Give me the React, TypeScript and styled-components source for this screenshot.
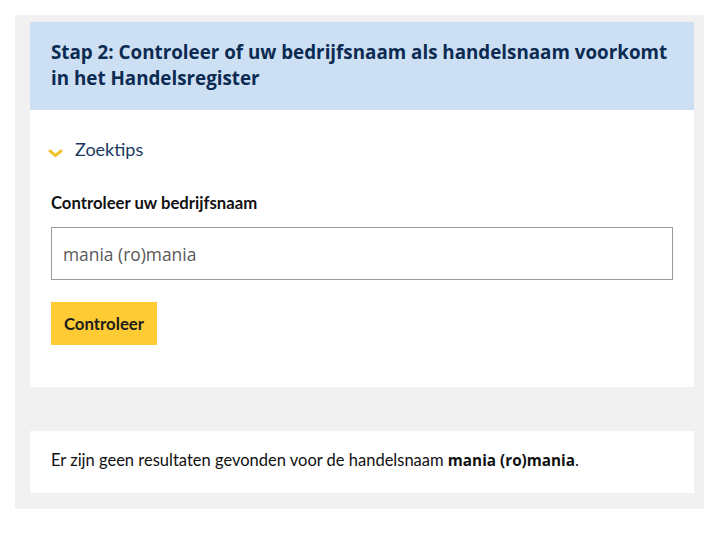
import React from "react";
import styled, { createGlobalStyle } from "styled-components";

const Global = createGlobalStyle`
  html, body { margin: 0; padding: 0; background: #ffffff; }
  body { font-family: Lato, "Open Sans", sans-serif; }
  * { box-sizing: border-box; }
`;

const Outer = styled.div`
  margin: 15px 0 0 15px;
  width: 689px;
  background: #f1f1f1;
  padding: 7px 10px 16px 15px;
  display: flex;
  flex-direction: column;
  gap: 44px;
`;

const Card = styled.section`
  background: #ffffff;
  display: flex;
  flex-direction: column;
`;

const Header = styled.div`
  background: #cddff3;
  height: 88px;
  padding: 17px 8px 0 21px;
`;

const Heading = styled.h2`
  margin: 0;
  font-family: "Open Sans", sans-serif;
  font-size: 18.8px;
  line-height: 26px;
  font-weight: 700;
  color: #0b2b52;
`;

const Body = styled.div`
  padding: 28px 21px 42px 21px;
  display: flex;
  flex-direction: column;
`;

const Toggle = styled.div`
  display: flex;
  align-items: center;
  gap: 12px;
  color: #1a3a63;
  font-size: 18px;
  height: 22px;
  margin-left: -3px;
  svg { margin-top: 7px; }
`;

const Label = styled.label`
  margin-top: 33px;
  font-size: 16.7px;
  font-weight: 700;
  color: #111;
  line-height: 20px;
`;

const Input = styled.div`
  margin-top: 14px;
  height: 53px;
  width: 622px;
  border: 1px solid #9a9a9a;
  display: flex;
  align-items: center;
  padding-left: 11px;
  font-family: "Open Sans", sans-serif;
  font-size: 17.4px;
  color: #595959;
`;

const Button = styled.button`
  margin-top: 22px;
  align-self: flex-start;
  height: 43px;
  width: 106px;
  border: 0;
  background: #fecb35;
  font-family: inherit;
  font-size: 16.8px;
  font-weight: 700;
  color: #1d1d1d;
  padding: 0;
`;

const Result = styled.div`
  background: #ffffff;
  height: 62px;
  padding: 0 21px 4px 21px;
  display: flex;
  align-items: center;
  font-size: 16.5px;
  color: #111;
`;

const Strong = styled.b`
  font-family: "Open Sans", sans-serif;
  font-size: 15.3px;
  font-weight: 700;
`;

export default function App() {
  return (
    <>
      <Global />
      <Outer>
        <Card>
          <Header>
            <Heading>
              Stap 2: Controleer of uw bedrijfsnaam als handelsnaam voorkomt in het Handelsregister
            </Heading>
          </Header>
          <Body>
            <Toggle>
              <svg width="15" height="10" viewBox="0 0 15 10">
                <path d="M2 3 L7.5 7.5 L13 3" fill="none" stroke="#f2c22e" strokeWidth="3" strokeLinecap="round" strokeLinejoin="round" />
              </svg>
              <span>Zoektips</span>
            </Toggle>
            <Label>Controleer uw bedrijfsnaam</Label>
            <Input>mania (ro)mania</Input>
            <Button>Controleer</Button>
          </Body>
        </Card>
        <Result>
          <span>
            Er zijn geen resultaten gevonden voor de handelsnaam <Strong>mania (ro)mania</Strong>.
          </span>
        </Result>
      </Outer>
    </>
  );
}
